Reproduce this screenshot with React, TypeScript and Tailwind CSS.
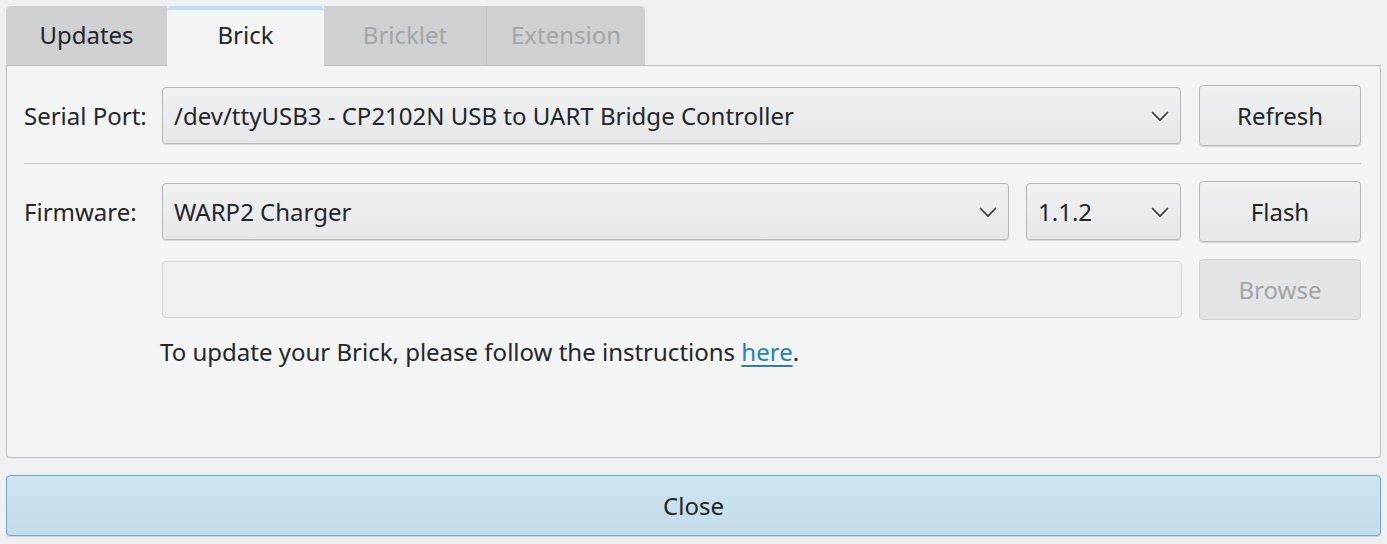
import React from "react";

const Chevron = () => (
  <svg width="20" height="12" viewBox="0 0 20 12" className="shrink-0">
    <path d="M2 2 L10 10 L18 2" fill="none" stroke="#31363b" strokeWidth="1.6" />
  </svg>
);

const Combo = ({ text, className }: { text: string; className: string }) => (
  <div
    className={`h-[57px] flex items-center justify-between pl-[11px] pr-[10px] pt-[1px] rounded-[4px] border border-[#b6b7b8] bg-gradient-to-b from-[#f0f1f1] to-[#e6e7e8] shadow-[0_1px_1px_rgba(0,0,0,0.12)] text-[#232629] ${className}`}
  >
    <span>{text}</span>
    <Chevron />
  </div>
);

const Button = ({ text, disabled }: { text: string; disabled?: boolean }) => (
  <div
    className={`w-[162px] h-[61px] shrink-0 flex items-center justify-center pt-[1px] rounded-[4px] border ${
      disabled
        ? "border-[#cfd0d1] bg-[#e3e4e5] text-[#a3a4a5]"
        : "border-[#b6b7b8] bg-gradient-to-b from-[#f0f1f1] to-[#e6e7e8] text-[#232629] shadow-[0_1px_1px_rgba(0,0,0,0.12)]"
    }`}
  >
    {text}
  </div>
);

export default function App() {
  return (
    <div
      className="w-[1387px] h-[544px] bg-[#eff0f1] flex flex-col px-[6px] pt-[6px] pb-[8px] text-[24px] text-[#232629]"
      style={{ fontFamily: '"Noto Sans", sans-serif' }}
    >
      {/* Tabs */}
      <div className="flex h-[60px] shrink-0">
        <div className="w-[161px] flex items-center justify-center pb-[2px] bg-[#cfd0d1] rounded-tl-[5px] border-b border-[#bcbdbe] text-[#232629]">
          Updates
        </div>
        <div className="w-[157px] flex flex-col bg-[#f3f4f4] rounded-t-[5px] border-t-[4px] border-[#bfe0f4]">
          <div className="flex-1 flex items-center justify-center pb-[6px]">Brick</div>
        </div>
        <div className="w-[163px] flex items-center justify-center pb-[2px] bg-[#cfd0d1] border-b border-r border-r-[#c2c3c4] border-b-[#bcbdbe] text-[#a4a5a6]">
          Bricklet
        </div>
        <div className="w-[158px] flex items-center justify-center pb-[2px] bg-[#cfd0d1] rounded-tr-[5px] border-b border-[#bcbdbe] text-[#a4a5a6]">
          Extension
        </div>
        <div className="flex-1 border-b border-[#bcbdbe]" />
      </div>

      {/* Panel */}
      <div className="flex-1 bg-[#f3f4f4] border border-t-0 border-[#bcbdbe] rounded-b-[4px] rounded-tr-[4px] pl-[17px] pr-[19px] pt-[19px] flex flex-col">
        <div className="flex items-center h-[61px]">
          <div className="w-[138px] shrink-0 pt-[1px]">Serial Port:</div>
          <Combo text="/dev/ttyUSB3 - CP2102N USB to UART Bridge Controller" className="flex-1" />
          <div className="w-[18px] shrink-0" />
          <Button text="Refresh" />
        </div>
        <div className="h-px bg-[#c4c5c6] mt-[17px] mb-[17px]" />
        <div className="flex items-center h-[61px]">
          <div className="w-[138px] shrink-0 pt-[1px]">Firmware:</div>
          <Combo text="WARP2 Charger" className="flex-1" />
          <div className="w-[17px] shrink-0" />
          <Combo text="1.1.2" className="w-[155px] shrink-0" />
          <div className="w-[18px] shrink-0" />
          <Button text="Flash" />
        </div>
        <div className="flex items-center h-[61px] mt-[17px]">
          <div className="w-[138px] shrink-0" />
          <div className="flex-1 h-[57px] rounded-[4px] border border-[#d3d4d5] bg-[#f0f0f0]" />
          <div className="w-[17px] shrink-0" />
          <Button text="Browse" disabled />
        </div>
        <div className="pl-[136px] mt-[16px] leading-[32px]">
          To update your Brick, please follow the instructions{" "}
          <span className="text-[#2980b9] underline underline-offset-[4px] decoration-[2px]">here</span>.
        </div>
      </div>

      <div className="h-[17px] shrink-0" />
      <div className="h-[61px] shrink-0 flex items-center justify-center pt-[1px] rounded-[4px] border-[1.5px] border-[#6ea9c9] bg-gradient-to-b from-[#cde4f1] to-[#c4dce9] shadow-[0_1px_1px_rgba(0,0,0,0.12)]">
        Close
      </div>
    </div>
  );
}
